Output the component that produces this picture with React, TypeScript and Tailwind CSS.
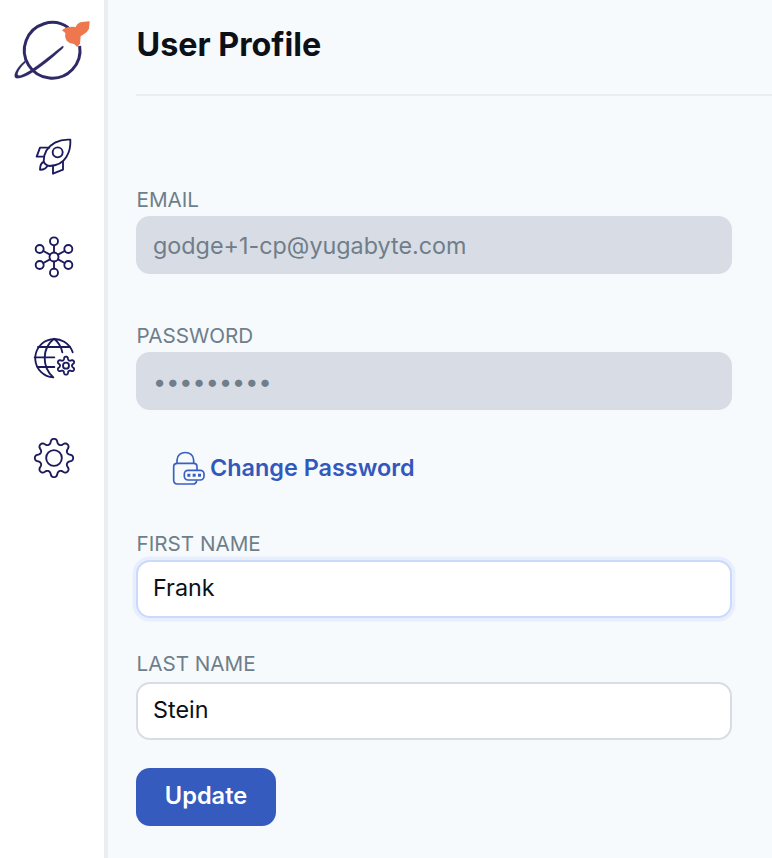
import React from "react";

const font = "font-['Inter','Liberation_Sans',sans-serif]";

/** Closed wavy outline of a gear, with one rounded lobe pointing straight up. */
function gearPath(cx: number, cy: number, base: number, amp: number, lobes: number) {
  const points: string[] = [];
  for (let i = 0; i < 240; i++) {
    const a = (i / 240) * Math.PI * 2;
    const r = base + amp * Math.cos(lobes * a);
    const t = a + (0.22 / lobes) * Math.sin(2 * lobes * a);
    points.push(`${(cx + r * Math.sin(t)).toFixed(2)} ${(cy - r * Math.cos(t)).toFixed(2)}`);
  }
  return `M${points.join("L")}Z`;
}

function NavIcon({ label, children }: { label: string; children: React.ReactNode }) {
  return (
    <a href="#" aria-label={label} className="block">
      <svg
        className="block h-[65px] w-[70px]"
        viewBox="0 0 210 195"
        fill="none"
        stroke="#1b1a5c"
        strokeWidth="5.6"
        strokeLinecap="round"
        strokeLinejoin="round"
      >
        {children}
      </svg>
    </a>
  );
}

function Logo() {
  return (
    <svg className="block h-[100px] w-[104px]" viewBox="0 0 312 300" fill="none">
      <path d="M205 83A83.5 83.5 0 1 0 239 138" stroke="#2f2a66" strokeWidth="9" />
      <path
        d="M188 138C192 139 191 142 187 146C153 177 114 208 84 225C69 232 53 238 46 233C38 224 54 198 75 182L76 188C62 200 49 219 54 226C60 230 80 219 96 208C132 183 159 160 188 138Z"
        fill="#2f2a66"
        stroke="#2f2a66"
        strokeWidth="0.6"
      />
      <path
        d="M186 91L197 83Q211 79 227 81Q233 68 245 66L269 64L267 86Q262 98 249 104L242 109L240 131L232 141L222 132Q207 130 200 122Q193 111 196 99Z"
        fill="#ee774d"
      />
    </svg>
  );
}

function Sidebar() {
  return (
    <aside className="flex h-[858px] w-[108px] shrink-0 flex-col border-r-4 border-[#e9eef2] bg-white">
      <Logo />
      <nav className="mt-[25px] flex flex-col gap-[35px] pl-5">
        <NavIcon label="Launch">
          <path d="M151 44Q126 42 105 53C83 65 71 85 71 109Q74 120 88 123C111 122 129 113 139 96Q153 74 151 44Z" />
          <circle cx="113" cy="82" r="15" />
          <path d="M88 68H60L50 95H72M129 109V134L99 146V122M71 111Q60 115 60 134Q75 135 82 123" />
        </NavIcon>
        <NavIcon label="Clusters">
          <circle cx="102" cy="96" r="13.5" />
          <circle cx="102" cy="49" r="12" />
          <circle cx="102" cy="143" r="12" />
          <circle cx="59" cy="72" r="12" />
          <circle cx="145" cy="72" r="12" />
          <circle cx="59" cy="120" r="12" />
          <circle cx="145" cy="120" r="12" />
          <path d="M102 61V82M102 110V131M70 78L90 89M114 89L134 78M70 114L90 103M114 103L134 114" />
        </NavIcon>
        <NavIcon label="Network">
          <path d="M158 82A57.5 57.5 0 1 0 100 157C64 125 66 69 102 41C116 52 124 65 127 82" />
          <path d="M54 66H149M44 97H103M53 126H103" />
          <path d={gearPath(138, 122, 22.5, 4.5, 6)} />
          <circle cx="138" cy="122" r="9" />
        </NavIcon>
        <NavIcon label="Settings">
          <path d={gearPath(102, 99, 50, 7.5, 8)} />
          <circle cx="102" cy="99" r="23.5" />
        </NavIcon>
      </nav>
    </aside>
  );
}

function Label({ htmlFor, children }: { htmlFor: string; children: string }) {
  return (
    <label htmlFor={htmlFor} className="block h-8 pl-[0.5px] text-[20.65px] leading-8 text-[#6f7e8a]">
      {children}
    </label>
  );
}

const inputBase = "block h-[58px] w-full rounded-[14px] text-[23.35px] outline-none";

function LockIcon() {
  return (
    <svg
      className="h-[36px] w-[34px]"
      viewBox="0 0 102 108"
      fill="none"
      stroke="#3a5fc0"
      strokeWidth="5"
      strokeLinejoin="round"
    >
      <path d="M18 40V30C18 0 68 0 68 30V40" />
      <path d="M78 60V50Q78 40 68 40H19Q8 40 8 50V90Q8 102 19 102H66Q76 102 77 91" />
      <rect x="40" y="61" width="59" height="29" rx="11" />
      <path d="M49 76h9M65 76h9M81 76h9" strokeWidth="9" />
    </svg>
  );
}

export default function App() {
  return (
    <div className={`flex h-[858px] w-full overflow-hidden bg-[#f6fafd] ${font}`}>
      <Sidebar />
      <main className="flex min-w-0 flex-1 flex-col pl-7">
        <header className="h-24 border-b-2 border-[#e9eef2] pt-[25px]">
          <h1 className="pl-[0.5px] text-[32.3px] leading-10 font-bold text-[#0b1117]">User Profile</h1>
        </header>
        <form className="flex w-[596px] flex-col pt-[88px]">
          <Label htmlFor="email">EMAIL</Label>
          <input
            id="email"
            disabled
            defaultValue="godge+1-cp@yugabyte.com"
            className={`${inputBase} bg-[#d8dce4] px-[17px] text-[#6f7e8a]`}
          />
          <div className="mt-[46px]">
            <Label htmlFor="password">PASSWORD</Label>
            <input
              id="password"
              disabled
              defaultValue="•••••••••"
              className={`${inputBase} bg-[#d8dce4] px-[17px] tracking-[0.05px] text-[#6f7e8a]`}
            />
          </div>
          <button type="button" className="mt-10 ml-[35px] flex h-9 items-center gap-[5px] self-start">
            <LockIcon />
            <span className="text-[23.4px] leading-9 font-semibold text-[#3358bc]">Change Password</span>
          </button>
          <div className="mt-[42px]">
            <Label htmlFor="first">FIRST NAME</Label>
            <input
              id="first"
              defaultValue="Frank"
              className={`${inputBase} border-2 border-[#cbdafb] bg-white px-[15px] pb-[3px] text-[#0b1117] shadow-[0_0_0_3.5px_#e7eefe]`}
            />
          </div>
          <div className="mt-[30px]">
            <Label htmlFor="last">LAST NAME</Label>
            <input
              id="last"
              defaultValue="Stein"
              className={`${inputBase} mt-0.5 border-2 border-[#d8dce4] bg-white px-[15px] pb-[3px] text-[#0b1117]`}
            />
          </div>
          <button
            type="button"
            className="mt-7 h-[58px] w-[140px] rounded-[14px] bg-[#345bbd] pb-0.5 text-[23.6px] font-semibold text-white"
          >
            Update
          </button>
        </form>
      </main>
    </div>
  );
}
